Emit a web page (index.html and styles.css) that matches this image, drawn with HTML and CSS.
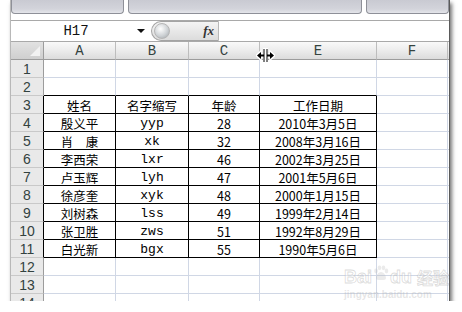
FILE: index.html
```html
<!DOCTYPE html>
<html lang="zh-CN">
<head>
  <meta charset="UTF-8">
  <title>Excel 工作表</title>
  <link rel="stylesheet" href="styles.css">
</head>
<body>
  <div class="window">
    <div class="ribbon">
      <div class="rb-btn rb-1"></div>
      <div class="rb-btn rb-2"></div>
      <div class="rb-btn rb-3"></div>
    </div>

    <div class="formula-bar">
      <div class="name-box">
        <span class="name-text">H17</span>
        <span class="name-dd"></span>
      </div>
      <div class="fx-pill">
        <span class="knob"></span>
        <span class="fx">fx</span>
      </div>
      <div class="formula-input"></div>
    </div>

    <div class="sheet">
      <!-- 列标题 -->
      <div class="corner"><span class="corner-tri"></span></div>
      <div class="ch">A</div>
      <div class="ch">B</div>
      <div class="ch">C</div>
      <div class="ch">E</div>
      <div class="ch">F</div>
      <div class="ch ch-x"></div>

      <div class="rh">1</div>
      <div class="c"></div><div class="c"></div><div class="c"></div><div class="c"></div><div class="c"></div><div class="c x"></div>

      <div class="rh">2</div>
      <div class="c tb"></div><div class="c tb"></div><div class="c tb"></div><div class="c tb"></div><div class="c"></div><div class="c x"></div>

      <div class="rh tl">3</div>
      <div class="c t">姓名</div><div class="c t">名字缩写</div><div class="c t">年龄</div><div class="c t">工作日期</div><div class="c"></div><div class="c x"></div>

      <div class="rh tl">4</div>
      <div class="c t">殷义平</div><div class="c t en">yyp</div><div class="c t">28</div><div class="c t">2010年3月5日</div><div class="c"></div><div class="c x"></div>

      <div class="rh tl">5</div>
      <div class="c t">肖　康</div><div class="c t en">xk</div><div class="c t">32</div><div class="c t">2008年3月16日</div><div class="c"></div><div class="c x"></div>

      <div class="rh tl">6</div>
      <div class="c t">李西荣</div><div class="c t en">lxr</div><div class="c t">46</div><div class="c t">2002年3月25日</div><div class="c"></div><div class="c x"></div>

      <div class="rh tl">7</div>
      <div class="c t">卢玉辉</div><div class="c t en">lyh</div><div class="c t">47</div><div class="c t">2001年5月6日</div><div class="c"></div><div class="c x"></div>

      <div class="rh tl">8</div>
      <div class="c t">徐彦奎</div><div class="c t en">xyk</div><div class="c t">48</div><div class="c t">2000年1月15日</div><div class="c"></div><div class="c x"></div>

      <div class="rh tl">9</div>
      <div class="c t">刘树森</div><div class="c t en">lss</div><div class="c t">49</div><div class="c t">1999年2月14日</div><div class="c"></div><div class="c x"></div>

      <div class="rh tl">10</div>
      <div class="c t">张卫胜</div><div class="c t en">zws</div><div class="c t">51</div><div class="c t">1992年8月29日</div><div class="c"></div><div class="c x"></div>

      <div class="rh tl">11</div>
      <div class="c t">白光新</div><div class="c t en">bgx</div><div class="c t">55</div><div class="c t">1990年5月6日</div><div class="c"></div><div class="c x"></div>

      <div class="rh">12</div>
      <div class="c"></div><div class="c"></div><div class="c"></div><div class="c"></div><div class="c"></div><div class="c x"></div>

      <div class="rh">13</div>
      <div class="c"></div><div class="c"></div><div class="c"></div><div class="c"></div><div class="c"></div><div class="c x"></div>

      <div class="rh">14</div>
      <div class="c"></div><div class="c"></div><div class="c"></div><div class="c"></div><div class="c"></div><div class="c x"></div>
    </div>

    <!-- 列宽调整光标 -->
    <svg class="resize-cursor" width="19" height="15" viewBox="0 0 19 15">
      <path d="M7 0h5v15H7z" fill="#fff"/>
      <path d="M0 7.5L5 3v3h3v3H5v3z M19 7.5L14 3v3h-3v3h3v3z" fill="#fff" stroke="#fff" stroke-width="1.5"/>
      <path d="M8 1v13 M11 1v13" stroke="#000" stroke-width="1"/>
      <path d="M1 7.5L5 4v2.5h3v2H5V11z M18 7.5L14 4v2.5h-3v2h3V11z" fill="#000"/>
    </svg>

    <!-- 水印 -->
    <div class="watermark">
      <div class="wm-logo">
        <span>Bai</span>
        <svg class="wm-paw" width="16" height="16" viewBox="0 0 16 16">
          <ellipse cx="3" cy="6" rx="1.8" ry="2.4"/>
          <ellipse cx="6.5" cy="2.8" rx="1.8" ry="2.4"/>
          <ellipse cx="10.5" cy="2.8" rx="1.8" ry="2.4"/>
          <ellipse cx="13.5" cy="6" rx="1.8" ry="2.4"/>
          <path d="M8 7c3 0 5 4 5 6s-2 2-5 2-5 0-5-2 2-6 5-6z"/>
        </svg>
        <span>du</span>
        <span class="wm-cn">经验</span>
      </div>
      <div class="wm-url">jingyan.baidu.com</div>
    </div>
  </div>
</body>
</html>
```

FILE: styles.css
```css
body {
  margin: 0;
  background: #fff;
  font-family: "Noto Sans CJK SC", sans-serif;
}

.window {
  position: relative;
  margin-left: 10px;
  width: 440px;
  height: 301px;
  box-sizing: border-box;
  border-left: 1px solid #b8b8b8;
  border-right: 1px solid #5a5a5a;
  background: #fff;
  box-shadow: 2px 3px 4px rgba(0, 0, 0, 0.55);
}

/* 顶部功能区按钮（被截断） */
.ribbon {
  display: flex;
  gap: 4px;
  height: 15px;
  margin-bottom: 5px;
}

.rb-btn {
  height: 14px;
  box-sizing: border-box;
  border: 1px solid #8e9098;
  border-top: none;
  border-radius: 0 0 4px 4px;
  background: linear-gradient(#c9cad2, #d3d4db 70%, #e4e5ea);
}

.rb-1 { width: 113px; }
.rb-2 { width: 234px; }
.rb-3 { flex: 1; }

/* 编辑栏 */
.formula-bar {
  display: flex;
  height: 22px;
  box-sizing: border-box;
  border-top: 1px solid #a9a9a9;
  border-bottom: 1px solid #a9a9a9;
}

.name-box {
  display: flex;
  align-items: center;
  width: 140px;
  background: #fff;
}

.name-text {
  flex: 1;
  text-align: center;
  font-family: "Liberation Mono", monospace;
  font-size: 14px;
  color: #111;
  padding-left: 4px;
}

.name-dd {
  width: 0;
  height: 0;
  margin-right: 6px;
  border-left: 4px solid transparent;
  border-right: 4px solid transparent;
  border-top: 4px solid #111;
}

.fx-pill {
  display: flex;
  align-items: center;
  justify-content: space-between;
  width: 68px;
  box-sizing: border-box;
  border: 1px solid #a4a4a4;
  border-right-color: #b8b8b8;
  border-radius: 11px 0 0 11px;
  background: linear-gradient(#f4f4f4, #dcdcdc);
  padding: 0 4px 0 2px;
}

.knob {
  width: 14px;
  height: 14px;
  border-radius: 50%;
  background: radial-gradient(circle at 40% 35%, #ffffff, #cfd3d6 55%, #9ea3a7);
  border: 1px solid #b6b6b6;
}

.fx {
  font-family: "Liberation Serif", serif;
  font-style: italic;
  font-weight: bold;
  font-size: 13px;
  color: #333;
}

.formula-input {
  flex: 1;
  background: #fff;
}

/* 工作表 */
.sheet {
  display: grid;
  grid-template-columns: 33px 72px 73px 71px 117px 71px 1fr;
  grid-auto-rows: 18px;
  height: 259px;
  overflow: hidden;
  font-size: 12.5px;
  color: #000;
}

.sheet > div {
  box-sizing: border-box;
}

.corner {
  position: relative;
  background: linear-gradient(#e2e2e2, #cfcfcf);
  border-right: 1px solid #9c9c9c;
  border-bottom: 1px solid #9c9c9c;
}

.corner-tri {
  position: absolute;
  right: 3px;
  bottom: 3px;
  width: 0;
  height: 0;
  border-left: 10px solid transparent;
  border-bottom: 10px solid #f2f2f2;
}

.ch {
  display: flex;
  align-items: center;
  justify-content: center;
  background: linear-gradient(#f9f9f9, #ececec 50%, #dcdcdc);
  border-right: 1px solid #bdbdbd;
  border-bottom: 1px solid #9c9c9c;
  font-family: "Liberation Mono", monospace;
  font-size: 14px;
  color: #34433f;
}

.ch-x {
  border-right: none;
}

.rh {
  display: flex;
  align-items: center;
  justify-content: center;
  background: #e9e9e9;
  border-right: 1px solid #9c9c9c;
  border-bottom: 1px solid #c9c9c9;
  font-family: "Liberation Sans", sans-serif;
  font-size: 14px;
  color: #33423f;
}

.rh.tl {
  border-right-color: #000;
}

.c {
  display: flex;
  align-items: center;
  justify-content: center;
  border-right: 1px solid #d0d7e5;
  border-bottom: 1px solid #d0d7e5;
  white-space: nowrap;
  padding-top: 1px;
}

.c.x {
  border-right: none;
}

.c.tb {
  border-bottom-color: #000;
}

.c.t {
  border-right-color: #000;
  border-bottom-color: #000;
}

.c.en {
  font-family: "Liberation Mono", monospace;
  font-size: 13px;
}

/* 浮层 */
.resize-cursor {
  position: absolute;
  left: 245px;
  top: 48px;
}

.watermark {
  position: absolute;
  left: 333px;
  top: 267px;
  color: rgba(255, 255, 255, 0.4);
  pointer-events: none;
}

.wm-logo {
  display: flex;
  align-items: center;
  gap: 1px;
  font-family: "Liberation Sans", sans-serif;
  font-weight: bold;
  font-size: 18px;
  line-height: 20px;
  -webkit-text-stroke: 0.8px rgba(175, 175, 175, 0.45);
}

.wm-paw {
  fill: rgba(190, 190, 190, 0.3);
  margin-top: -8px;
}

.wm-cn {
  font-family: "Noto Sans CJK SC", sans-serif;
  font-size: 16px;
  margin-left: 4px;
}

.wm-url {
  font-family: "Liberation Sans", sans-serif;
  font-size: 10px;
  font-weight: bold;
  margin-top: 2px;
  color: rgba(180, 180, 180, 0.35);
  -webkit-text-stroke: 0;
}
```
